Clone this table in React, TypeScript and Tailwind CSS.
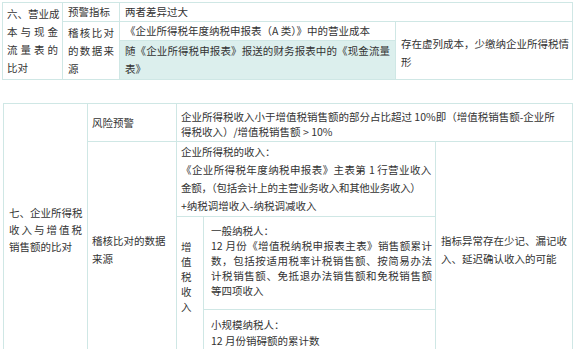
import React from 'react';

type LineProps = { children: React.ReactNode; j?: boolean; className?: string };

// one forced line; j = stretch across the cell like the justified source
const Line: React.FC<LineProps> = ({ children, j, className = '' }) => (
    <div className={`whitespace-nowrap ${j ? '[text-align-last:justify]' : ''} ${className}`}>{children}</div>
);

const td = 'border border-[#cfe7e5] align-middle';

const App: React.FC = () => {
    return (
        <div
            className="w-[574px] h-[349px] bg-white text-[#333333] text-[10.5px] overflow-hidden"
            style={{ fontFamily: '"Noto Sans CJK SC", "Noto Sans", sans-serif' }}
        >
            {/* 六、营业成本与现金流量表的比对 */}
            <table className="ml-[2px] mt-[2px] w-[570px] table-fixed border-collapse leading-[18px]">
                <colgroup>
                    <col className="w-[60px]" />
                    <col className="w-[57px]" />
                    <col className="w-[276px]" />
                    <col className="w-[177px]" />
                </colgroup>
                <tbody>
                    <tr className="h-[19px]">
                        <td rowSpan={3} className={`${td} px-[4px]`}>
                            <Line j>六、营业成</Line>
                            <Line j>本与现金</Line>
                            <Line j>流量表的</Line>
                            <Line>比对</Line>
                        </td>
                        <td className={`${td} px-[5px]`}>预警指标</td>
                        <td colSpan={2} className={`${td} px-[5px]`}>两者差异过大</td>
                    </tr>
                    <tr className="h-[18px]">
                        <td rowSpan={2} className={`${td} px-[5px]`}>
                            <Line j>稽核比对</Line>
                            <Line j>的数据来</Line>
                            <Line>源</Line>
                        </td>
                        <td className={`${td} px-[5px]`}>
                            <Line>《企业所得税年度纳税申报表（A 类）》中的营业成本</Line>
                        </td>
                        <td rowSpan={2} className={`${td} px-[5px] pt-[4px]`}>
                            <Line j>存在虚列成本，少缴纳企业所得税情</Line>
                            <Line>形</Line>
                        </td>
                    </tr>
                    <tr className="h-[39px]">
                        <td className={`${td} bg-[#dcefed] px-[5px]`}>
                            <Line j>随《企业所得税申报表》报送的财务报表中的《现金流量</Line>
                            <Line>表》</Line>
                        </td>
                    </tr>
                </tbody>
            </table>

            {/* 七、企业所得税收入与增值税销售额的比对 */}
            <table className="ml-[3px] mt-[23px] w-[569px] table-fixed border-collapse">
                <colgroup>
                    <col className="w-[84px]" />
                    <col className="w-[89px]" />
                    <col className="w-[27px]" />
                    <col className="w-[232px]" />
                    <col className="w-[137px]" />
                </colgroup>
                <tbody>
                    <tr className="h-[38px]">
                        <td rowSpan={4} className={`${td} px-[5px] pt-[5px] leading-[17px]`}>
                            <Line j>七、企业所得税</Line>
                            <Line j>收入与增值税</Line>
                            <Line>销售额的比对</Line>
                        </td>
                        <td className={`${td} px-[4px]`}>风险预警</td>
                        <td colSpan={3} className={`${td} px-[4px] pt-[2px] leading-[15px]`}>
                            <Line>企业所得税收入小于增值税销售额的部分占比超过 10%即（增值税销售额-企业所</Line>
                            <Line>得税收入）/增值税销售额 &gt; 10%</Line>
                        </td>
                    </tr>
                    <tr className="h-[75px]">
                        <td rowSpan={3} className={`${td} px-[4px] pt-[8px] leading-[18px]`}>
                            <Line>稽核比对的数据</Line>
                            <Line>来源</Line>
                        </td>
                        <td colSpan={2} className={`${td} px-[4px] leading-[18px]`}>
                            <Line>企业所得税的收入：</Line>
                            <Line j className="tracking-[-0.3px]">《企业所得税年度纳税申报表》主表第 1 行营业收入</Line>
                            <Line className="tracking-[-0.3px]">金额，（包括会计上的主营业务收入和其他业务收入）</Line>
                            <Line>+纳税调增收入-纳税调减收入</Line>
                        </td>
                        <td rowSpan={3} className={`${td} px-[5px] pt-[8px] leading-[18px]`}>
                            <Line j>指标异常存在少记、漏记收</Line>
                            <Line>入、延迟确认收入的可能</Line>
                        </td>
                    </tr>
                    <tr className="h-[93px]">
                        <td rowSpan={2} className={`${td} !align-top px-[4px] pt-[22px] leading-[15px]`}>
                            <Line>增</Line>
                            <Line>值</Line>
                            <Line>税</Line>
                            <Line>收</Line>
                            <Line>入</Line>
                        </td>
                        <td className={`${td} !align-top pl-[7px] pr-[3px] pt-[6px] leading-[15px]`}>
                            <Line>一般纳税人：</Line>
                            <Line j>12 月份《增值税纳税申报表主表》销售额累计</Line>
                            <Line j>数，包括按适用税率计税销售额、按简易办法</Line>
                            <Line j>计税销售额、免抵退办法销售额和免税销售额</Line>
                            <Line>等四项收入</Line>
                        </td>
                    </tr>
                    <tr className="h-[39px]">
                        <td className={`${td} !align-top pl-[7px] pr-[3px] pt-[7px] leading-[16px]`}>
                            <Line>小规模纳税人：</Line>
                            <Line>12 月份销碍额的累计数</Line>
                        </td>
                    </tr>
                </tbody>
            </table>
        </div>
    );
};

export default App;
